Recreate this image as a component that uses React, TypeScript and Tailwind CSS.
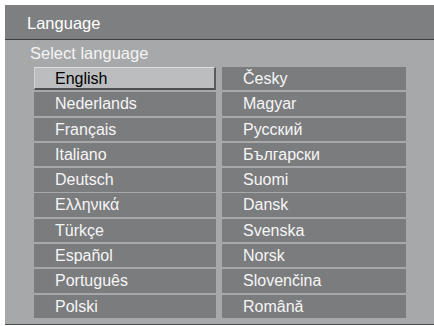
import { useState } from 'react';

const left = ['English', 'Nederlands', 'Français', 'Italiano', 'Deutsch', 'Ελληνικά', 'Türkçe', 'Español', 'Português', 'Polski'];
const right = ['Česky', 'Magyar', 'Русский', 'Български', 'Suomi', 'Dansk', 'Svenska', 'Norsk', 'Slovenčina', 'Română'];

function Row({ label, active, onClick }: { label: string; active: boolean; onClick: () => void }) {
  return (
    <button
      onClick={onClick}
      className={
        active
          ? 'h-[23.4px] w-full text-left pl-[20px] text-[16px] leading-[22px] text-black bg-[#bcbdbf] border-t border-t-[#dedfe0] border-b-2 border-b-[#4f5052] border-r-2 border-r-[#5a5b5d] border-l border-l-[#d0d1d2]'
        : 'h-[23.4px] w-full text-left pl-[21px] text-[16px] leading-[24px] text-[#f6f6f6] bg-[#7b7c7e]'
      }
    >
      {label}
    </button>
  );
}

export default function App() {
  const [selected, setSelected] = useState('English');

  return (
    <div className="w-[434px] h-[326px] bg-white pl-[5px] pt-[5px]" style={{ fontFamily: '"Liberation Sans", Arial, sans-serif' }}>
      <div className="flex flex-col">
        <div className="h-[35px] bg-[#7e7f81] border-b border-b-[#3f4042] pl-[22px] text-[16.5px] leading-[36px] text-white">Language</div>
        <div className="bg-[#a7a8aa] pb-[6px] border-b border-b-[#4a4b4d]">
          <div className="h-[27px] pl-[25px] text-[16.5px] leading-[27px] text-[#f4f4f4]">Select language</div>
          <div className="grid grid-cols-[182px_184px] gap-x-[6px] pl-[29px]">
            <div className="flex flex-col gap-[1.9px]">
              {left.map((l) => (
                <Row key={l} label={l} active={selected === l} onClick={() => setSelected(l)} />
              ))}
            </div>
            <div className="flex flex-col gap-[1.9px]">
              {right.map((l) => (
                <Row key={l} label={l} active={selected === l} onClick={() => setSelected(l)} />
              ))}
            </div>
          </div>
        </div>
      </div>
    </div>
  );
}
